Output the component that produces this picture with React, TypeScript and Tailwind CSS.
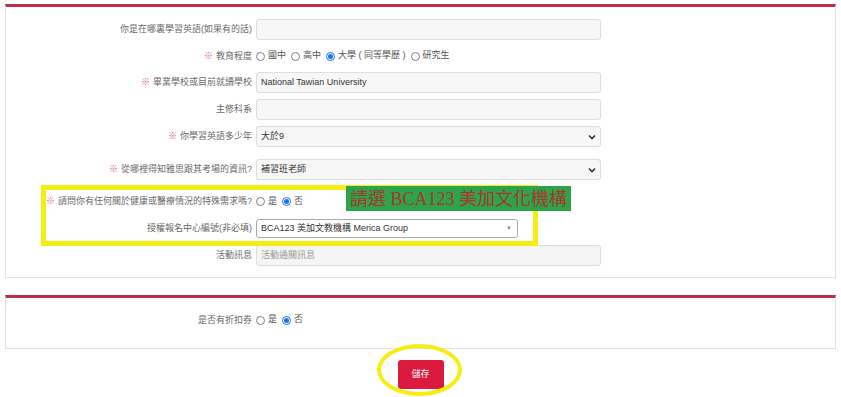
import React from "react";

const font = { fontFamily: '"Liberation Sans", "Noto Sans CJK TC", sans-serif' };

function Radio({ checked }: { checked?: boolean }) {
  return checked ? (
    <span className="inline-flex items-center justify-center w-[9px] h-[9px] rounded-full border border-[#1a73e8] bg-white">
      <span className="w-[5px] h-[5px] rounded-full bg-[#1a73e8]" />
    </span>
  ) : (
    <span className="inline-block w-[9px] h-[9px] rounded-full border border-[#808080] bg-white" />
  );
}

function Label({ req, children }: { req?: boolean; children: React.ReactNode }) {
  return (
    <div className="w-[246px] shrink-0 text-right text-[9px] text-[#6a6a6a] leading-none whitespace-nowrap">
      {req && <span className="text-[#e0587a] mr-[3px]">※</span>}
      {children}
    </div>
  );
}

function Chevron() {
  return (
    <svg width="8" height="6" viewBox="0 0 8 6" className="shrink-0">
      <path d="M1 1.5 L4 4.5 L7 1.5" fill="none" stroke="#333" strokeWidth="1.6" />
    </svg>
  );
}

function Opt({ checked, children }: { checked?: boolean; children: React.ReactNode }) {
  return (
    <span className="inline-flex items-center gap-[3px] mr-[5px]">
      <Radio checked={checked} />
      <span>{children}</span>
    </span>
  );
}

export default function App() {
  return (
    <div className="relative w-[841px] h-[397px] bg-white overflow-hidden" style={font}>
      <div className="px-[5px] pt-[4px]">
        {/* Panel 1 */}
        <div className="w-[831px] border-t-[3px] border-t-[#c12d48] border-x border-b border-x-[#e2e2e2] border-b-[#e2e2e2] pt-[12px] pb-[11px]">
          <div className="flex items-center gap-[4px] h-[21px]">
            <Label>你是在哪裏學習英語(如果有的話)</Label>
            <div className="w-[345px] h-[21px] rounded-[3px] border border-[#dedede] bg-[#f7f7f7]" />
          </div>
          <div className="flex items-center gap-[4px] h-[32px]">
            <Label req>教育程度</Label>
            <div className="flex items-center text-[9px] text-[#555] whitespace-nowrap">
              <Opt>國中</Opt>
              <Opt>高中</Opt>
              <Opt checked>大學 ( 同等學歷 )</Opt>
              <Opt>研究生</Opt>
            </div>
          </div>
          <div className="flex items-center gap-[4px] h-[21px]">
            <Label req>畢業學校或目前就讀學校</Label>
            <div className="w-[345px] h-[21px] rounded-[3px] border border-[#dedede] bg-[#f7f7f7] flex items-center px-[4px] text-[9px] text-[#333]">
              National Tawian University
            </div>
          </div>
          <div className="flex items-center gap-[4px] h-[21px] mt-[6px]">
            <Label>主修科系</Label>
            <div className="w-[345px] h-[21px] rounded-[3px] border border-[#dedede] bg-[#f7f7f7]" />
          </div>
          <div className="flex items-center gap-[4px] h-[21px] mt-[6px]">
            <Label req>你學習英語多少年</Label>
            <div className="w-[345px] h-[21px] rounded-[3px] border border-[#dedede] bg-[#f7f7f7] flex items-center justify-between px-[4px] text-[9px] text-[#333]">
              <span>大於9</span>
              <Chevron />
            </div>
          </div>
          <div className="flex items-center gap-[4px] h-[21px] mt-[12px]">
            <Label req>從哪裡得知雅思跟其考場的資訊?</Label>
            <div className="w-[345px] h-[21px] rounded-[3px] border border-[#dedede] bg-[#f7f7f7] flex items-center justify-between px-[4px] text-[9px] text-[#333]">
              <span>補習班老師</span>
              <Chevron />
            </div>
          </div>
          <div className="flex items-center gap-[4px] h-[35px] mt-[4px]">
            <Label req>請問你有任何關於健康或醫療情況的特殊需求嗎?</Label>
            <div className="flex items-center text-[9px] text-[#555] whitespace-nowrap">
              <Opt>是</Opt>
              <Opt checked>否</Opt>
            </div>
          </div>
          <div className="flex items-center gap-[4px] h-[19px]">
            <Label>授權報名中心編號(非必填)</Label>
            <div className="w-[262px] h-[19px] rounded-[3px] border border-[#aaa] bg-white flex items-center justify-between px-[4px] text-[9px] text-[#333]">
              <span>BCA123 美加文教機構 Merica Group</span>
              <span className="text-[6px] text-[#888] mr-[1px]">▼</span>
            </div>
          </div>
          <div className="flex items-center gap-[4px] h-[21px] mt-[7px]">
            <Label>活動訊息</Label>
            <div className="w-[345px] h-[21px] rounded-[3px] border border-[#dedede] bg-[#f5f5f5] flex items-center px-[4px] text-[9px] text-[#999]">
              活動通關訊息
            </div>
          </div>
        </div>

        {/* Panel 2 */}
        <div className="w-[831px] mt-[17px] border-t-[3px] border-t-[#c12d48] border-x border-b border-x-[#e2e2e2] border-b-[#e2e2e2] pt-[13px] pb-[19px]">
          <div className="flex items-center gap-[4px] h-[18px]">
            <Label>是否有折扣券</Label>
            <div className="flex items-center text-[9px] text-[#555] whitespace-nowrap">
              <Opt>是</Opt>
              <Opt checked>否</Opt>
            </div>
          </div>
        </div>

        <div className="flex justify-center mt-[11px]">
          <button className="w-[46px] h-[29px] rounded-[3px] bg-[#dc1a3e] text-white text-[9px]">儲存</button>
        </div>
      </div>

      {/* Annotations */}
      <div className="absolute left-[41px] top-[185px] w-[497px] h-[61px] border-[5px] border-[#f6ee12]" />
      <div
        className="absolute left-[346px] top-[186px] w-[225px] h-[25px] bg-[#2ea44a] flex items-center justify-center text-[18px] text-[#a8362c] whitespace-nowrap leading-none"
        style={{ fontFamily: '"Liberation Serif", "Noto Sans CJK TC", serif' }}
      >
        請選 BCA123 美加文化機構
      </div>
      <div className="absolute left-[377px] top-[344px] w-[85px] h-[52px] rounded-[50%] border-[4px] border-[#f6ee12]" />
    </div>
  );
}
